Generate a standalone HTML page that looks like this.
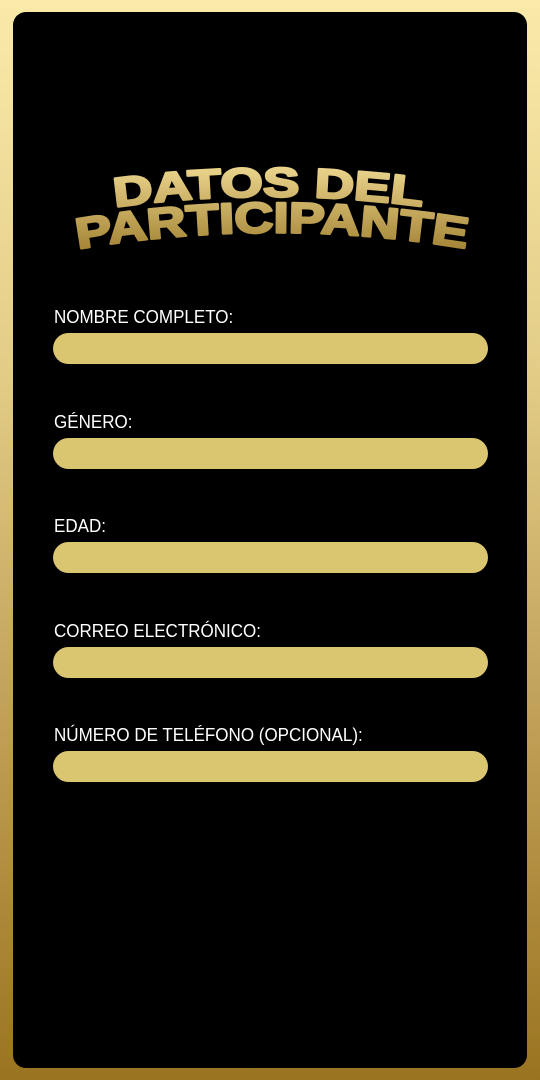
<!DOCTYPE html>
<html><head><meta charset="utf-8"><style>
html,body{margin:0;padding:0}
body{width:540px;height:1080px;position:relative;overflow:hidden;background:linear-gradient(#faeaaa 0%,#e2cc86 35%,#c2a25a 65%,#9a7420 100%);font-family:"Liberation Sans",sans-serif}
.panel{position:absolute;left:13px;top:12px;width:514px;height:1056px;background:#000;border-radius:13px}
.lbl{position:absolute;left:54px;color:#fff;font-size:18px;line-height:20px;transform:scaleX(0.945);transform-origin:left}
.fld{position:absolute;left:53px;width:435px;height:31px;border-radius:16px;background:#dac670}
svg{position:absolute;left:0;top:0}
</style></head><body>
<div class="panel"></div>
<svg width="540" height="300">
<defs>
<linearGradient id="g2" x1="0" y1="165" x2="0" y2="255" gradientUnits="userSpaceOnUse">
<stop offset="0" stop-color="#ecd68e"/><stop offset="1" stop-color="#a07f30"/></linearGradient>
<path id="p1" d="M115 207 Q270 186 426 207"/>
<path id="p2" d="M78 249 Q272 216 470 249"/>
</defs>
<text font-family="Liberation Sans" font-weight="bold" font-size="41" fill="url(#g2)" stroke="url(#g2)" stroke-width="2.5" stroke-linejoin="round"><textPath href="#p1" textLength="308" lengthAdjust="spacingAndGlyphs">DATOS DEL</textPath></text>
<text font-family="Liberation Sans" font-weight="bold" font-size="43" fill="url(#g2)" stroke="url(#g2)" stroke-width="2.5" stroke-linejoin="round"><textPath href="#p2" textLength="390" lengthAdjust="spacingAndGlyphs">PARTICIPANTE</textPath></text>
</svg>
<div class="lbl" style="top:307px">NOMBRE COMPLETO:</div><div class="fld" style="top:333px"></div>
<div class="lbl" style="top:412px">GÉNERO:</div><div class="fld" style="top:438px"></div>
<div class="lbl" style="top:516px">EDAD:</div><div class="fld" style="top:542px"></div>
<div class="lbl" style="top:621px">CORREO ELECTRÓNICO:</div><div class="fld" style="top:647px"></div>
<div class="lbl" style="top:725px">NÚMERO DE TELÉFONO (OPCIONAL):</div><div class="fld" style="top:751px"></div>
</body></html>
